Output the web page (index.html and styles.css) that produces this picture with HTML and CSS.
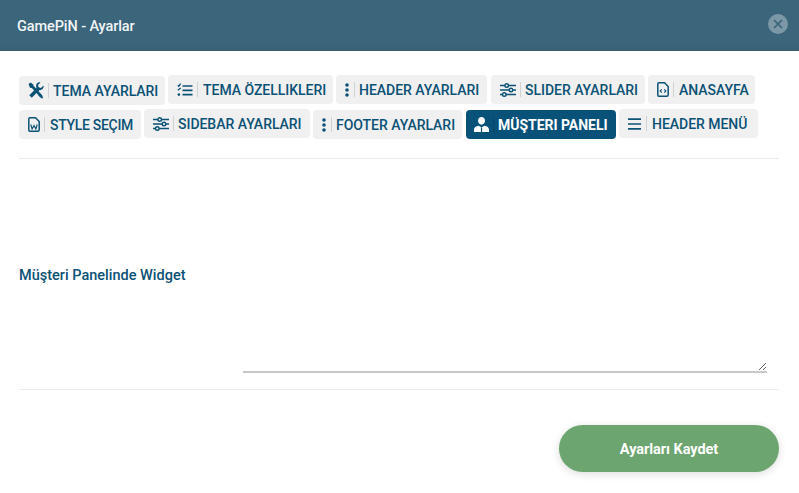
FILE: index.html
```html
<!DOCTYPE html>
<html lang="tr">
<head>
<meta charset="utf-8">
<title>GamePiN - Ayarlar</title>
<link rel="stylesheet" href="styles.css">
</head>
<body>
<header class="head">
  <span class="head-title">GamePiN - Ayarlar</span>
  <button class="close" aria-label="Kapat"><svg width="10" height="10" viewBox="0 0 10 10"><path d="M1 1l8 8M9 1l-8 8" stroke="#3a6479" stroke-width="1.700" fill="none"/></svg></button>
</header>
<main class="body">
  <nav class="tabs">
    <a class="tab low w146"><span class="ico"><svg width="16" height="17" viewBox="0 0 16 17"><path d="M2.500 2.500L13.500 14.500" stroke="#0b5275" stroke-width="2.600" fill="none"/><path d="M.6 2.300L2.300.6l3 2-.1 1.900-1.600 1.500-1.600-.2z" fill="#0b5275"/><path d="M11.500 12l3.800 3-1.200 1.700-3.700-3.300z" fill="#0b5275"/><path d="M2.500 14.500L11 6" stroke="#0b5275" stroke-width="3.600" fill="none"/><path d="M15.600 3.500l-2.700 2.400-2.400-.6-.5-2.300L12.500.5C9.800-.2 7.900 1.800 8.100 4.300c.1 1.300 1 2.900 2.200 3.500 2.900 1.300 6-1.300 5.300-4.300z" fill="#0b5275"/></svg></span><span class="sep"></span>TEMA AYARLARI</a>
    <a class="tab w165"><span class="ico"><svg width="16" height="14" viewBox="0 0 16 14"><path d="M5.500 3h10M5.500 7.300h10M5.500 11.600h10" stroke="#0b5275" stroke-width="1.700"/><path d="M.8 2.200l1 1L3.700.6M.8 7.300L3.700 5" stroke="#0b5275" stroke-width="1.300" fill="none"/><rect x=".6" y="10.300" width="2.600" height="2.600" rx="1.300" fill="#0b5275"/></svg></span><span class="sep sep-wide"></span>TEMA ÖZELLIKLERI</a>
    <a class="tab w151"><span class="ico ico-dots"><svg width="4" height="14" viewBox="0 0 4 14"><circle cx="2" cy="2" r="1.800" fill="#0b5275"/><circle cx="2" cy="7" r="1.800" fill="#0b5275"/><circle cx="2" cy="12" r="1.800" fill="#0b5275"/></svg></span><span class="sep"></span>HEADER AYARLARI</a>
    <a class="tab w154"><span class="ico"><svg width="16" height="14" viewBox="0 0 16 14"><g stroke="#0b5275" fill="#f0f0f0" stroke-width="1.400"><path d="M0 2.500h16M0 7h16M0 11.500h16"/><circle cx="6.700" cy="2.500" r="1.800"/><circle cx="11" cy="7" r="1.800"/><circle cx="4.300" cy="11.500" r="1.800"/></g></svg></span><span class="sep"></span>SLIDER AYARLARI</a>
    <a class="tab w107"><span class="ico ico-file"><svg width="12" height="15" viewBox="0 0 12 15"><path d="M1.800.8h5.700l3.700 3.700v8.200c0 .8-.6 1.500-1.400 1.500H1.800C1 14.200.8 13.500.8 12.700V2.300C.8 1.500 1 .8 1.800.8z" fill="none" stroke="#0b5275" stroke-width="1.500"/><path d="M4.800 7.300L3.100 9l1.700 1.700M7.200 7.300L8.900 9l-1.700 1.700" fill="none" stroke="#0b5275" stroke-width="1.100"/></svg></span><span class="sep sep-wide"></span>ANASAYFA</a>
    <a class="tab low tight w122"><span class="ico ico-file"><svg width="12" height="15" viewBox="0 0 12 15"><path d="M1.800.8h5.700l3.700 3.700v8.200c0 .8-.6 1.500-1.400 1.500H1.800C1 14.200.8 13.500.8 12.700V2.300C.8 1.500 1 .8 1.800.8z" fill="none" stroke="#0b5275" stroke-width="1.500"/><path d="M2.800 7.500l1.300 4.500L6 8.500 7.900 12l1.300-4.500" fill="none" stroke="#0b5275" stroke-width="1.100"/></svg></span><span class="sep sep-wide"></span>STYLE SEÇIM</a>
    <a class="tab w166"><span class="ico"><svg width="16" height="14" viewBox="0 0 16 14"><g stroke="#0b5275" fill="#f0f0f0" stroke-width="1.400"><path d="M0 2.500h16M0 7h16M0 11.500h16"/><circle cx="6.700" cy="2.500" r="1.800"/><circle cx="11" cy="7" r="1.800"/><circle cx="4.300" cy="11.500" r="1.800"/></g></svg></span><span class="sep"></span>SIDEBAR AYARLARI</a>
    <a class="tab low w149"><span class="ico ico-dots"><svg width="4" height="14" viewBox="0 0 4 14"><circle cx="2" cy="2" r="1.800" fill="#0b5275"/><circle cx="2" cy="7" r="1.800" fill="#0b5275"/><circle cx="2" cy="12" r="1.800" fill="#0b5275"/></svg></span><span class="sep"></span>FOOTER AYARLARI</a>
    <a class="tab low active w150"><span class="ico ico-user"><svg width="15" height="15" viewBox="0 0 15 15"><path d="M7.500 0c2 0 3.500 1.500 3.500 3.600S9.500 7.800 7.500 7.800 4 5.700 4 3.600 5.500 0 7.500 0z" fill="#fff"/><path d="M0 15v-2.600c0-2 1.800-3 4.700-3.700l2.800 1.800 2.800-1.800c2.900.7 4.700 1.700 4.700 3.700V15z" fill="#fff"/><path d="M7.500 10.500v4.500" stroke="#08527a" stroke-width="1.200"/></svg></span><span class="sep"></span>MÜŞTERI PANELI</a>
    <a class="tab w139"><span class="ico ico-menu"><svg width="13" height="12" viewBox="0 0 13 12"><path d="M0 1.200h13M0 6h13M0 10.800h13" stroke="#0b5275" stroke-width="1.700"/></svg></span><span class="sep sep-both"></span>HEADER MENÜ</a>
  </nav>
  <hr class="rule rule-top">
  <div class="field">
    <label class="field-label" for="w">Müşteri Panelinde Widget</label>
    <textarea class="field-input" id="w"></textarea>
  </div>
  <hr class="rule rule-bottom">
  <div class="actions"><button class="save">Ayarları Kaydet</button></div>
</main>
</body>
</html>
```
FILE: styles.css
```css
* { box-sizing: border-box; }
html, body { margin: 0; height: 100%; background: #fff; overflow: hidden; }
body { font-family: Roboto, "Open Sans", sans-serif; color: #0b5275; }
.head {
  height: 51px;
  padding: 0 11px 3px 17px;
  display: flex;
  align-items: center;
  justify-content: space-between;
  background: linear-gradient(to bottom, #3a657b 0, #3a657b 85%, #375f74 100%);
}
.head-title { color: #f1f4f6; font-size: 14.500px; font-weight: 500; position: relative; top: 2px; letter-spacing: -.1px; }
.close {
  width: 20px; height: 20px; padding: 0; border: 0; border-radius: 50%;
  background: #7c97a5; display: flex; align-items: center; justify-content: center;
}
.body { padding: 24px 20px 0 19px; }
.tabs { display: flex; flex-wrap: wrap; align-items: flex-start; column-gap: 3px; row-gap: 4px; width: 760px; }
.tab {
  height: 29px; display: flex; align-items: center; padding-left: 9px;
  background: #f0f0f0; border-radius: 4px;
  font-size: 14px; font-weight: 500; color: #0b5275; white-space: nowrap; letter-spacing: -.03px;
}
.tab.low { margin-top: 1px; }
.tab.tight { letter-spacing: -.3px; }
.tab.active { background: #08527a; color: #fff; font-weight: 700; padding-left: 8px; }
.ico { width: 16px; display: flex; align-items: center; justify-content: center; flex: none; }
.ico-dots { width: 4px; }
.ico-file { width: 12px; }
.ico-user { width: 15px; }
.ico-menu { width: 13px; }
.sep { width: 1px; height: 15px; background: #cfd3d6; margin: 0 4px; flex: none; }
.ico-dots + .sep { margin-left: 5px; }
.sep-wide { margin-right: 5px; }
.sep-both { margin: 0 5px; }
.active .sep { background: #0a4766; }
.w146 { width: 146px; } .w165 { width: 165px; } .w151 { width: 151px; margin-right: 1px; }
.w154 { width: 154px; } .w107 { width: 107px; } .w122 { width: 122px; }
.w166 { width: 166px; } .w149 { width: 149px; margin-right: 1px; } .w150 { width: 150px; } .w139 { width: 139px; }
.rule { border: 0; border-top: 1px solid #ebebeb; margin: 0; }
.rule-top { margin-top: 19px; }
.field { display: flex; align-items: center; height: 195px; margin-top: 19px; }
.field-label { width: 224px; font-size: 14.500px; font-weight: 500; flex: none; }
.field-input {
  width: 524px; height: 195px; border: 0; border-bottom: 2px solid #c8c8c8; outline: 0; background: #fff; resize: vertical; padding: 0;
}
.rule-bottom { margin-top: 16px; }
.actions { display: flex; justify-content: flex-end; margin-top: 35px; }
.save {
  width: 220px; height: 47px; border: 0; border-radius: 24px; background: #6ca56f; color: #fff; padding: 1px 0 0;
  font-family: inherit; font-size: 14.500px; font-weight: 700; letter-spacing: -.05px;
  box-shadow: 0 2px 8px rgba(0,0,0,.14);
}
```
